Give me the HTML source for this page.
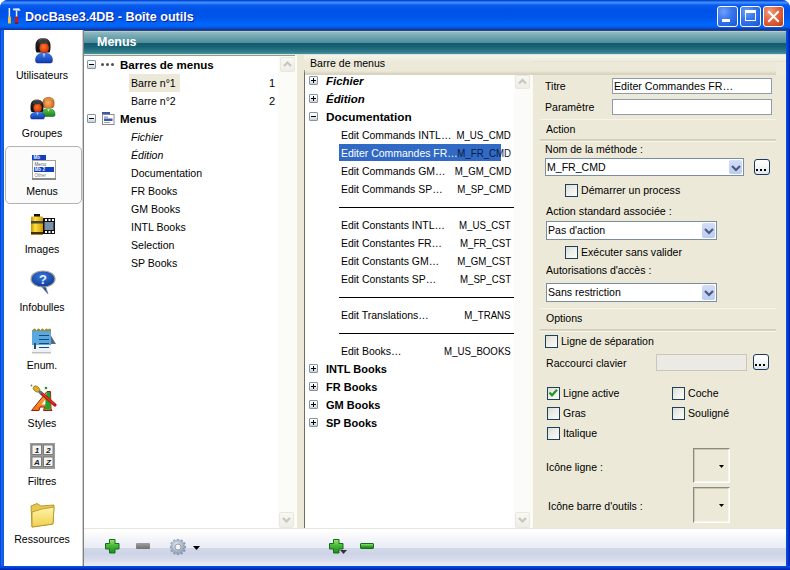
<!DOCTYPE html><html><head><meta charset="utf-8"><style>
html,body{margin:0;padding:0;width:790px;height:570px;overflow:hidden;background:#fff;}
body{position:relative;font-family:"Liberation Sans",sans-serif;color:#000;}
.t{position:absolute;white-space:pre;}
.pm{position:absolute;width:7px;height:7px;border:1px solid #8494a2;border-radius:1px;background:linear-gradient(180deg,#fff 0%,#f4f5f6 45%,#c8d0d6 100%);}
.pm:before{content:"";position:absolute;left:1px;top:3px;width:5px;height:1px;background:#000;}
.pm.plus:after{content:"";position:absolute;left:3px;top:1px;width:1px;height:5px;background:#000;}
.cb{position:absolute;width:11px;height:11px;border:1px solid #1c5180;background:linear-gradient(135deg,#dcdcd7 0%,#f0f0ea 60%,#fff 100%);}
.combo{position:absolute;border:1px solid #7f9db9;background:#fff;box-sizing:border-box;}
.dd{position:absolute;right:1px;top:1px;bottom:1px;width:15px;border-radius:2px;background:linear-gradient(180deg,#d4e0fc,#b6c9f7);}
.dots{position:absolute;box-sizing:border-box;border:1px solid #003c74;border-radius:3px;background:linear-gradient(180deg,#fff 0%,#ecf4fc 60%,#d6e4f4 100%);}
.sep{position:absolute;height:1px;}
</style></head><body>

<div style="position:absolute;left:0px;top:0px;width:790px;height:570px;background:#0054e3;border-radius:8px 8px 0 0;"></div>
<div style="position:absolute;left:0px;top:0px;width:790px;height:30px;border-radius:8px 8px 0 0;background:linear-gradient(180deg,#0646d4 0px,#0a4ad8 1px,#3d95ff 2px,#3a8cfc 3px,#0a5cf0 5px,#0052e6 10px,#0054ea 17px,#0064f8 23px,#0066fa 26px,#0a50d8 28px,#0838b0 29px,#1a3a90 30px);"></div>
<div style="position:absolute;left:0px;top:30px;width:4px;height:540px;background:linear-gradient(90deg,#0831d9,#166aee 40%,#0855dd);"></div>
<div style="position:absolute;left:786px;top:30px;width:4px;height:540px;background:linear-gradient(90deg,#0855dd,#003bda 50%,#001ea0);"></div>
<div style="position:absolute;left:0px;top:566px;width:790px;height:4px;background:linear-gradient(180deg,#0855dd,#003bda 50%,#001ea0);"></div>
<svg style="position:absolute;left:6px;top:7px" width="16" height="18" viewBox="0 0 16 18">
<rect x="2.6" y="1" width="1.5" height="9" fill="#e8f0fa"/>
<path d="M2.4 9.6 L4.4 9.6 L4.9 11 L4.9 16 Q4.9 16.6 4.3 16.6 L2.6 16.6 Q2 16.6 2 16 L2 11 Z" fill="#f0c838"/>
<path d="M7 1.6 L13 1.2 L14.8 3.4 L13 3.7 L7 3.2 Z" fill="#e0e8f4"/>
<rect x="9.8" y="3.5" width="1.5" height="6.5" fill="#e8f0fa"/>
<path d="M9.4 9.6 L11.7 9.6 L12.1 11 L12.1 16.6 L9 16.6 L9 11 Z" fill="#c81820"/>
<rect x="9" y="15.6" width="3.1" height="1" fill="#501010"/>
</svg>
<div class="t" style="left:25px;top:9.99px;font-size:13px;line-height:13px;font-weight:bold;color:#fff;transform:scaleX(0.965);transform-origin:left;text-shadow:1px 1px 0 #0a1e9a;">DocBase3.4DB - Boîte outils</div>
<div style="position:absolute;left:717px;top:6px;width:21px;height:21px;box-sizing:border-box;border:1px solid #fff;border-radius:3px;background:radial-gradient(circle at 30% 25%,#6f9ff8 0%,#3a78f0 40%,#2461e0 80%,#1d50c8 100%);"></div>
<div style="position:absolute;left:722px;top:19px;width:8px;height:3px;background:#fff;"></div>
<div style="position:absolute;left:740px;top:6px;width:21px;height:21px;box-sizing:border-box;border:1px solid #fff;border-radius:3px;background:radial-gradient(circle at 30% 25%,#6f9ff8 0%,#3a78f0 40%,#2461e0 80%,#1d50c8 100%);"></div>
<div style="position:absolute;left:745px;top:10px;width:11px;height:11px;box-sizing:border-box;border:1px solid #fff;border-top-width:3px;"></div>
<div style="position:absolute;left:763px;top:6px;width:21px;height:21px;box-sizing:border-box;border:1px solid #fff;border-radius:3px;background:radial-gradient(circle at 30% 25%,#f0a080 0%,#e26a44 40%,#cf4a24 80%,#b63a18 100%);"></div>
<svg style="position:absolute;left:763px;top:6px" width="21" height="21"><path d="M6 6 L15 15 M15 6 L6 15" stroke="#fff" stroke-width="2" stroke-linecap="square"/></svg>
<div style="position:absolute;left:4px;top:30px;width:782px;height:536px;background:#ece9d8;"></div>
<div style="position:absolute;left:4px;top:30px;width:78px;height:536px;background:#fff;"></div>
<div style="position:absolute;left:82px;top:30px;width:1px;height:536px;background:#d0d0d0;"></div>
<div style="position:absolute;left:83px;top:30px;width:1px;height:536px;background:#808080;"></div>
<div style="position:absolute;left:84px;top:30px;width:702px;height:25px;background:linear-gradient(180deg,#28487a 0px,#28487a 1px,#b4cacc 1px,#b4cacc 2px,#92bac2 2px,#74a8b2 6px,#4e8e9c 13px,#145a6e 13px,#1a6276 17px,#307e8c 22px,#4c96a0 24px,#e4ece6 24px);"></div>
<div class="t" style="left:97px;top:34.99px;font-size:13px;line-height:13px;font-weight:bold;color:#fff;transform:scaleX(0.96);transform-origin:left;">Menus</div>
<div style="position:absolute;left:84px;top:54px;width:702px;height:1px;background:#dae4de;"></div>

<div style="position:absolute;left:5px;top:146px;width:77px;height:58px;box-sizing:border-box;border:1px solid #b2b2ae;border-radius:5px;background:#fbfbfb;"></div>
<div class="t" style="left:42px;width:0;top:69.69px;font-size:11px;line-height:11px;transform:scaleX(0.96);transform-origin:0 0;display:flex;justify-content:center;">Utilisateurs</div>
<div class="t" style="left:42px;width:0;top:127.69px;font-size:11px;line-height:11px;transform:scaleX(0.96);transform-origin:0 0;display:flex;justify-content:center;">Groupes</div>
<div class="t" style="left:42px;width:0;top:185.69px;font-size:11px;line-height:11px;transform:scaleX(0.96);transform-origin:0 0;display:flex;justify-content:center;">Menus</div>
<div class="t" style="left:42px;width:0;top:243.69px;font-size:11px;line-height:11px;transform:scaleX(0.96);transform-origin:0 0;display:flex;justify-content:center;">Images</div>
<div class="t" style="left:42px;width:0;top:301.69px;font-size:11px;line-height:11px;transform:scaleX(0.96);transform-origin:0 0;display:flex;justify-content:center;">Infobulles</div>
<div class="t" style="left:42px;width:0;top:359.69px;font-size:11px;line-height:11px;transform:scaleX(0.96);transform-origin:0 0;display:flex;justify-content:center;">Enum.</div>
<div class="t" style="left:42px;width:0;top:417.69px;font-size:11px;line-height:11px;transform:scaleX(0.96);transform-origin:0 0;display:flex;justify-content:center;">Styles</div>
<div class="t" style="left:42px;width:0;top:475.69px;font-size:11px;line-height:11px;transform:scaleX(0.96);transform-origin:0 0;display:flex;justify-content:center;">Filtres</div>
<div class="t" style="left:42px;width:0;top:533.69px;font-size:11px;line-height:11px;transform:scaleX(0.96);transform-origin:0 0;display:flex;justify-content:center;">Ressources</div>
<svg style="position:absolute;left:22px;top:32px" width="40" height="40" viewBox="0 0 40 40">
<defs><radialGradient id="face" cx="45%" cy="40%" r="65%"><stop offset="0" stop-color="#ff7a28"/><stop offset="1" stop-color="#c82408"/></radialGradient>
<radialGradient id="hair" cx="50%" cy="15%" r="70%"><stop offset="0" stop-color="#9a9a9a"/><stop offset="0.45" stop-color="#2a2a2a"/><stop offset="1" stop-color="#111"/></radialGradient>
<linearGradient id="blu" x1="0" y1="0" x2="0" y2="1"><stop offset="0" stop-color="#3a7af0"/><stop offset="1" stop-color="#1038b0"/></linearGradient></defs>
<path d="M13.5 13.5 C13.5 8.5 16.5 6 21 6 C25.5 6 28.5 8.5 28.5 13.5 C28.5 16.5 28.5 18.5 27.5 20.5 L14.5 20.5 C13.5 18.5 13.5 16.5 13.5 13.5 Z" fill="url(#hair)"/>
<ellipse cx="22.2" cy="16" rx="4.8" ry="5.3" fill="url(#face)"/>
<path d="M17 10.5 C19 12 23 12 27 10.5 C26 8 24 7 21 7 C18.5 7 17.5 8.5 17 10.5 Z" fill="#3a3a3a"/>
<path d="M13.5 28.5 C13.5 23.5 16.5 21 22 21 C27.5 21 30.5 23.5 30.5 28.5 C30.5 30.5 29.5 31 28 31 L16 31 C14.5 31 13.5 30.5 13.5 28.5 Z" fill="url(#blu)" stroke="#0c2a80" stroke-width="0.5"/>
<path d="M20.5 21.2 L23.5 21.2 L22 26 Z" fill="#90c8f8"/>
</svg>
<svg style="position:absolute;left:22px;top:90px" width="40" height="40" viewBox="0 0 40 40">
<defs><radialGradient id="face2" cx="45%" cy="40%" r="65%"><stop offset="0" stop-color="#ffb068"/><stop offset="1" stop-color="#e07020"/></radialGradient>
<linearGradient id="grn" x1="0" y1="0" x2="0" y2="1"><stop offset="0" stop-color="#60c850"/><stop offset="1" stop-color="#188020"/></linearGradient></defs>
<path d="M20.5 13 C20.5 9 23 7 26.5 7 C30 7 32.5 9 32.5 13 C32.5 15.5 32 17 31 18 L22 18 C21 17 20.5 15.5 20.5 13 Z" fill="#b87030"/>
<ellipse cx="26.5" cy="13.5" rx="4.3" ry="4.8" fill="url(#face2)"/>
<path d="M22 10 C24 11 28 11 31.5 10 C30.5 8 29 7.5 26.5 7.5 C24 7.5 22.5 8.5 22 10 Z" fill="#d89048"/>
<path d="M20 24.5 C20 20.5 22.5 18.5 26.5 18.5 C30.5 18.5 33 20.5 33 24.5 C33 26 32.5 26.5 31 26.5 L22 26.5 C20.5 26.5 20 26 20 24.5 Z" fill="url(#grn)" stroke="#0c5a10" stroke-width="0.5"/>
<path d="M25.2 18.7 L27.8 18.7 L26.5 22 Z" fill="#c8f0b0"/>
<path d="M8.5 16.5 C8.5 12 11 9.5 15 9.5 C19 9.5 21.5 12 21.5 16.5 C21.5 19 21.5 20.5 20.5 22 L9.5 22 C8.5 20.5 8.5 19 8.5 16.5 Z" fill="url(#hair)"/>
<ellipse cx="15.6" cy="18" rx="4.2" ry="4.6" fill="url(#face)"/>
<path d="M11 13.5 C13 14.5 17 14.5 20 13.5 C19 11 17.5 10.3 15 10.3 C13 10.3 11.5 11.5 11 13.5 Z" fill="#3a3a3a"/>
<path d="M8.5 26.5 C8.5 23.5 11 22 15.5 22 C20 22 22.5 23.5 22.5 26.5 C22.5 28.5 22 29 20.5 29 L10.5 29 C9 29 8.5 28.5 8.5 26.5 Z" fill="url(#blu)" stroke="#0c2a80" stroke-width="0.5"/>
<path d="M14.3 22.2 L16.7 22.2 L15.5 25.5 Z" fill="#90c8f8"/>
</svg>
<svg style="position:absolute;left:22px;top:148px" width="40" height="40" viewBox="0 0 40 40">
<rect x="10" y="7" width="14" height="5" fill="#1040c0"/>
<text x="11.5" y="11" font-family="Liberation Sans" font-weight="bold" font-size="4.6" fill="#e8f0ff">Mb</text>
<rect x="10.5" y="12.5" width="23" height="19" fill="#fff" stroke="#a0a0a0" stroke-width="1"/>
<rect x="10" y="30" width="24" height="2" fill="#8a8a8a"/>
<text x="12.5" y="17.5" font-family="Liberation Sans" font-size="4.6" fill="#555">Menu</text>
<rect x="12" y="19" width="20" height="5" fill="#1040c0"/>
<text x="12.5" y="23" font-family="Liberation Sans" font-weight="bold" font-size="4.6" fill="#e8f0ff">Mb 2</text>
<text x="12.5" y="28.5" font-family="Liberation Sans" font-size="4.6" fill="#777">Other</text>
</svg>
<svg style="position:absolute;left:22px;top:206px" width="40" height="40" viewBox="0 0 40 40">
<defs><linearGradient id="yel" x1="0" y1="0" x2="1" y2="0"><stop offset="0" stop-color="#c89000"/><stop offset="0.35" stop-color="#ffe040"/><stop offset="1" stop-color="#d09800"/></linearGradient></defs>
<rect x="9" y="17" width="13" height="1" fill="#000"/>
<rect x="21" y="12" width="12" height="16" fill="#111"/>
<rect x="22.5" y="16" width="9" height="8" fill="#7890a8"/>
<rect x="23" y="13" width="2" height="2" fill="#fff"/><rect x="26.5" y="13" width="2" height="2" fill="#fff"/><rect x="30" y="13" width="2" height="2" fill="#fff"/>
<rect x="23" y="25" width="2" height="2" fill="#fff"/><rect x="26.5" y="25" width="2" height="2" fill="#fff"/><rect x="30" y="25" width="2" height="2" fill="#fff"/>
<rect x="12" y="8" width="6" height="3" fill="#111"/>
<rect x="9" y="10.5" width="12" height="18" rx="1" fill="url(#yel)"/>
<rect x="9" y="15" width="12" height="2.5" fill="#444"/>
<rect x="9" y="26" width="12" height="2.5" fill="#443300"/>
</svg>
<svg style="position:absolute;left:22px;top:264px" width="40" height="40" viewBox="0 0 40 40">
<defs><radialGradient id="bub" cx="45%" cy="35%" r="65%"><stop offset="0" stop-color="#3a78d8"/><stop offset="1" stop-color="#0c3a98"/></radialGradient></defs>
<path d="M19 22 L26 30 L23 21 Z" fill="#1848a8" stroke="#888" stroke-width="0.8"/>
<ellipse cx="21" cy="15" rx="12" ry="8" fill="url(#bub)" stroke="#a0a0a0" stroke-width="1.2"/>
<text x="21" y="20" font-family="Liberation Sans" font-weight="bold" font-size="13" fill="#e8f0ff" text-anchor="middle">?</text>
</svg>
<svg style="position:absolute;left:22px;top:322px" width="40" height="40" viewBox="0 0 40 40">
<path d="M28 12 L34 22 L28 22 Z" fill="#5a6878"/>
<rect x="10" y="7" width="19" height="24" fill="#eef2f6"/>
<rect x="10" y="30" width="19" height="1.5" fill="#c0c0c0"/>
<rect x="10" y="8" width="19" height="15" fill="#5aa8e0"/>
<g fill="#a08830"><circle cx="12.5" cy="8" r="1.5"/><circle cx="16.5" cy="8" r="1.5"/><circle cx="20.5" cy="8" r="1.5"/><circle cx="24.5" cy="8" r="1.5"/><circle cx="27.5" cy="8" r="1.5"/></g>
<rect x="17" y="13" width="10" height="1" fill="#1a4a78"/><rect x="17" y="17" width="10" height="1" fill="#1a4a78"/><rect x="17" y="21" width="10" height="1" fill="#1a4a78"/><rect x="17" y="25" width="10" height="1" fill="#1a4a78"/>
<rect x="12" y="21" width="2" height="6" fill="#2a4a68"/>
</svg>
<svg style="position:absolute;left:22px;top:380px" width="40" height="40" viewBox="0 0 40 40">
<defs><linearGradient id="org" x1="0" y1="0" x2="0" y2="1"><stop offset="0" stop-color="#ffb040"/><stop offset="1" stop-color="#f07018"/></linearGradient></defs>
<path d="M9.5 30.5 L25 11.5 L28.5 11.5 L29 29 L30 30.5 L21.5 30.5 L22.5 27 L18 27 L17 30.5 Z" fill="url(#org)" stroke="#982010" stroke-width="1" stroke-linejoin="round"/>
<path d="M25 12 L28 12 L28.5 29.5 L23 29.5 L23.5 19 Z" fill="#22a030"/>
<path d="M19.5 24.5 L23.3 24.5 L23.3 19.5 Z" fill="#fff"/>
<path d="M19 13 L33 25" stroke="#b81810" stroke-width="3.2" stroke-linecap="round"/>
<path d="M20 13.5 L32 24" stroke="#e85040" stroke-width="1" stroke-linecap="round"/>
<path d="M17 11 L19.5 13.3" stroke="#4a7a98" stroke-width="3" />
<ellipse cx="14.5" cy="9" rx="3.6" ry="2.6" transform="rotate(40 14.5 9)" fill="#d8b020" stroke="#806010" stroke-width="0.6"/>
<circle cx="24" cy="8" r="1.3" fill="#2a8a40"/><circle cx="9.5" cy="5.5" r="0.9" fill="#777"/>
</svg>
<svg style="position:absolute;left:22px;top:438px" width="40" height="40" viewBox="0 0 40 40">
<rect x="8" y="5" width="25" height="26" fill="#9a9a98"/>
<rect x="10" y="7" width="9.5" height="9.5" fill="#f4f4f2" stroke="#6a6a68" stroke-width="0.8"/>
<rect x="21.5" y="7" width="9.5" height="9.5" fill="#f4f4f2" stroke="#6a6a68" stroke-width="0.8"/>
<rect x="10" y="19" width="9.5" height="9.5" fill="#f4f4f2" stroke="#6a6a68" stroke-width="0.8"/>
<rect x="21.5" y="19" width="9.5" height="9.5" fill="#f4f4f2" stroke="#6a6a68" stroke-width="0.8"/>
<g font-family="Liberation Sans" font-weight="bold" font-style="italic" font-size="8" fill="#222" text-anchor="middle">
<text x="15" y="15">1</text><text x="26.5" y="15">2</text><text x="15" y="27">A</text><text x="26.5" y="27">Z</text></g>
</svg>
<svg style="position:absolute;left:22px;top:496px" width="40" height="40" viewBox="0 0 40 40">
<defs><linearGradient id="fold" x1="0" y1="0" x2="0" y2="1"><stop offset="0" stop-color="#fff4a8"/><stop offset="1" stop-color="#f0d050"/></linearGradient></defs>
<path d="M9 10 L15 7.5 L19 10 L32 9 L31 28 L10 31 Z" fill="#e8c850" stroke="#a88818" stroke-width="0.8"/>
<path d="M10 16 L20 13 L32 11 L31 28 L10 31 Z" fill="url(#fold)" stroke="#b09020" stroke-width="0.8"/>
</svg>
<div style="position:absolute;left:84px;top:55px;width:213px;height:473px;background:#fff;"></div>
<div style="position:absolute;left:84px;top:55px;width:213px;height:1px;background:#9c9a8e;"></div>
<div style="position:absolute;left:278px;top:56px;width:17px;height:472px;background:#fbfbf8;"></div>
<div style="position:absolute;left:295px;top:55px;width:2px;height:473px;background:#fdfdf6;"></div>
<div style="position:absolute;left:297px;top:55px;width:7px;height:473px;background:#ece9d8;"></div>
<div style="position:absolute;left:304px;top:72px;width:1px;height:456px;background:#6e6e62;"></div>
<div style="position:absolute;left:280px;top:57px;width:15px;height:15px;box-sizing:border-box;border:1px solid #e8e8e0;border-radius:2px;background:linear-gradient(180deg,#f8f8f4,#eeede6);"></div>
<svg style="position:absolute;left:280px;top:57px" width="15" height="15"><path d="M4 9 L7.5 5.5 L11 9" fill="none" stroke="#c6c6be" stroke-width="2.2"/></svg>
<div style="position:absolute;left:279px;top:512px;width:15px;height:16px;box-sizing:border-box;border:1px solid #e8e8e0;border-radius:2px;background:linear-gradient(180deg,#f8f8f4,#eeede6);"></div>
<svg style="position:absolute;left:279px;top:512px" width="15" height="16"><path d="M4 6 L7.5 9.5 L11 6" fill="none" stroke="#c6c6be" stroke-width="2.2"/></svg>
<div class="pm" style="left:87px;top:60px"></div>
<svg style="position:absolute;left:100px;top:62px" width="16" height="5"><circle cx="2.5" cy="2.5" r="1.5" fill="#505050"/><circle cx="7.5" cy="2.5" r="1.5" fill="#505050"/><circle cx="12.5" cy="2.5" r="1.5" fill="#505050"/></svg>
<div class="t" style="left:120px;top:59.69px;font-size:11px;line-height:11px;font-weight:bold;transform:scaleX(1.05);transform-origin:left;">Barres de menus</div>
<div style="position:absolute;left:129px;top:74px;width:51px;height:18px;background:#ece9d8;"></div>
<div class="t" style="left:131px;top:77.69px;font-size:11px;line-height:11px;transform:scaleX(0.96);transform-origin:left;">Barre n°1</div>
<div class="t" style="left:131px;top:95.69px;font-size:11px;line-height:11px;transform:scaleX(0.96);transform-origin:left;">Barre n°2</div>
<div class="t" style="right:515px;top:77.69px;font-size:11px;line-height:11px;transform:scaleX(1);transform-origin:right;">1</div>
<div class="t" style="right:515px;top:95.69px;font-size:11px;line-height:11px;transform:scaleX(1);transform-origin:right;">2</div>
<div class="pm" style="left:87px;top:114px"></div>
<svg style="position:absolute;left:101px;top:111px" width="15" height="16" viewBox="0 0 15 16">
<rect x="1" y="1" width="8" height="2.5" fill="#3a58b0"/>
<rect x="1.5" y="3.5" width="11.5" height="10" fill="#fff" stroke="#8a8a88" stroke-width="1"/>
<rect x="3" y="5.5" width="4" height="1.5" fill="#a0a8c0"/>
<rect x="3" y="7.5" width="8.5" height="2.5" fill="#3a5ab0"/>
<rect x="3" y="11" width="6" height="1" fill="#a0a0b0"/>
</svg>
<div class="t" style="left:120px;top:113.69px;font-size:11px;line-height:11px;font-weight:bold;transform:scaleX(1.05);transform-origin:left;">Menus</div>
<div class="t" style="left:131px;top:131.69px;font-size:11px;line-height:11px;font-style:italic;transform:scaleX(0.96);transform-origin:left;">Fichier</div>
<div class="t" style="left:131px;top:149.69px;font-size:11px;line-height:11px;font-style:italic;transform:scaleX(0.96);transform-origin:left;">Édition</div>
<div class="t" style="left:131px;top:167.69px;font-size:11px;line-height:11px;transform:scaleX(0.96);transform-origin:left;">Documentation</div>
<div class="t" style="left:131px;top:185.69px;font-size:11px;line-height:11px;transform:scaleX(0.96);transform-origin:left;">FR Books</div>
<div class="t" style="left:131px;top:203.69px;font-size:11px;line-height:11px;transform:scaleX(0.96);transform-origin:left;">GM Books</div>
<div class="t" style="left:131px;top:221.69px;font-size:11px;line-height:11px;transform:scaleX(0.96);transform-origin:left;">INTL Books</div>
<div class="t" style="left:131px;top:239.69px;font-size:11px;line-height:11px;transform:scaleX(0.96);transform-origin:left;">Selection</div>
<div class="t" style="left:131px;top:257.69px;font-size:11px;line-height:11px;transform:scaleX(0.96);transform-origin:left;">SP Books</div>
<div style="position:absolute;left:304px;top:55px;width:482px;height:20px;background:linear-gradient(180deg,#f6f5ee 0px,#f2f0e5 3px,#ece9d9 7px,#ece9d8 16px,#e4e0cf 17px,#d8d3bf 19px,#d8d3bf 20px);"></div>
<div style="position:absolute;left:533px;top:61px;width:253px;height:1px;background:#e6e2d2;"></div>
<div class="t" style="left:310px;top:57.69px;font-size:11px;line-height:11px;transform:scaleX(0.96);transform-origin:left;">Barre de menus</div>
<div style="position:absolute;left:305px;top:75px;width:209px;height:453px;background:#fff;"></div>
<div style="position:absolute;left:304px;top:70px;width:1px;height:458px;background:linear-gradient(180deg,#a8a598,#6e6e62 4px);"></div>
<div style="position:absolute;left:514px;top:75px;width:17px;height:453px;background:#fbfbf8;"></div>
<div style="position:absolute;left:531px;top:75px;width:2px;height:453px;background:#fdfdf6;"></div>
<div style="position:absolute;left:515px;top:75px;width:15px;height:14px;box-sizing:border-box;border:1px solid #e8e8e0;border-radius:2px;background:linear-gradient(180deg,#f8f8f4,#eeede6);"></div>
<svg style="position:absolute;left:515px;top:75px" width="15" height="14"><path d="M4 8.5 L7.5 5 L11 8.5" fill="none" stroke="#c6c6be" stroke-width="2.2"/></svg>
<div style="position:absolute;left:515px;top:512px;width:15px;height:16px;box-sizing:border-box;border:1px solid #e8e8e0;border-radius:2px;background:linear-gradient(180deg,#f8f8f4,#eeede6);"></div>
<svg style="position:absolute;left:515px;top:512px" width="15" height="16"><path d="M4 6 L7.5 9.5 L11 6" fill="none" stroke="#c6c6be" stroke-width="2.2"/></svg>
<div class="pm plus" style="left:309px;top:76px"></div>
<div class="t" style="left:326px;top:75.69px;font-size:11px;line-height:11px;font-weight:bold;font-style:italic;transform:scaleX(1.04);transform-origin:left;">Fichier</div>
<div class="pm plus" style="left:309px;top:94px"></div>
<div class="t" style="left:326px;top:93.69px;font-size:11px;line-height:11px;font-weight:bold;font-style:italic;transform:scaleX(1.04);transform-origin:left;">Édition</div>
<div class="pm" style="left:309px;top:112px"></div>
<div class="t" style="left:326px;top:111.69px;font-size:11px;line-height:11px;font-weight:bold;transform:scaleX(1.07);transform-origin:left;">Documentation</div>
<div style="position:absolute;left:339px;top:144px;width:162px;height:17px;background:#316ac5;"></div>
<div class="t" style="left:341px;top:129.69px;font-size:11px;line-height:11px;transform:scaleX(0.95);transform-origin:left;">Edit Commands INTL…</div>
<div class="t" style="right:279px;top:129.69px;font-size:11px;line-height:11px;transform:scaleX(0.88);transform-origin:right;">M_US_CMD</div>
<div class="t" style="left:341px;top:147.69px;font-size:11px;line-height:11px;color:#fff;transform:scaleX(0.95);transform-origin:left;">Editer Commandes FR…</div>
<div class="t" style="right:279px;top:147.69px;font-size:11px;line-height:11px;color:#0a1a40;transform:scaleX(0.88);transform-origin:right;">M_FR_CMD</div>
<div class="t" style="left:341px;top:165.69px;font-size:11px;line-height:11px;transform:scaleX(0.95);transform-origin:left;">Edit Commands GM…</div>
<div class="t" style="right:279px;top:165.69px;font-size:11px;line-height:11px;transform:scaleX(0.88);transform-origin:right;">M_GM_CMD</div>
<div class="t" style="left:341px;top:183.69px;font-size:11px;line-height:11px;transform:scaleX(0.95);transform-origin:left;">Edit Commands SP…</div>
<div class="t" style="right:279px;top:183.69px;font-size:11px;line-height:11px;transform:scaleX(0.88);transform-origin:right;">M_SP_CMD</div>
<div class="t" style="left:341px;top:219.69px;font-size:11px;line-height:11px;transform:scaleX(0.95);transform-origin:left;">Edit Constants INTL…</div>
<div class="t" style="right:279px;top:219.69px;font-size:11px;line-height:11px;transform:scaleX(0.88);transform-origin:right;">M_US_CST</div>
<div class="t" style="left:341px;top:237.69px;font-size:11px;line-height:11px;transform:scaleX(0.95);transform-origin:left;">Edit Constantes FR…</div>
<div class="t" style="right:279px;top:237.69px;font-size:11px;line-height:11px;transform:scaleX(0.88);transform-origin:right;">M_FR_CST</div>
<div class="t" style="left:341px;top:255.69px;font-size:11px;line-height:11px;transform:scaleX(0.95);transform-origin:left;">Edit Constants GM…</div>
<div class="t" style="right:279px;top:255.69px;font-size:11px;line-height:11px;transform:scaleX(0.88);transform-origin:right;">M_GM_CST</div>
<div class="t" style="left:341px;top:273.69px;font-size:11px;line-height:11px;transform:scaleX(0.95);transform-origin:left;">Edit Constants SP…</div>
<div class="t" style="right:279px;top:273.69px;font-size:11px;line-height:11px;transform:scaleX(0.88);transform-origin:right;">M_SP_CST</div>
<div class="t" style="left:341px;top:309.69px;font-size:11px;line-height:11px;transform:scaleX(0.95);transform-origin:left;">Edit Translations…</div>
<div class="t" style="right:279px;top:309.69px;font-size:11px;line-height:11px;transform:scaleX(0.88);transform-origin:right;">M_TRANS</div>
<div class="t" style="left:341px;top:345.69px;font-size:11px;line-height:11px;transform:scaleX(0.95);transform-origin:left;">Edit Books…</div>
<div class="t" style="right:279px;top:345.69px;font-size:11px;line-height:11px;transform:scaleX(0.88);transform-origin:right;">M_US_BOOKS</div>
<div style="position:absolute;left:339px;top:207px;width:175px;height:1px;background:#000;"></div>
<div style="position:absolute;left:339px;top:297px;width:175px;height:1px;background:#000;"></div>
<div style="position:absolute;left:339px;top:333px;width:175px;height:1px;background:#000;"></div>
<div class="pm plus" style="left:309px;top:364px"></div>
<div class="t" style="left:326px;top:363.69px;font-size:11px;line-height:11px;font-weight:bold;transform:scaleX(1.0);transform-origin:left;">INTL Books</div>
<div class="pm plus" style="left:309px;top:382px"></div>
<div class="t" style="left:326px;top:381.69px;font-size:11px;line-height:11px;font-weight:bold;transform:scaleX(1.0);transform-origin:left;">FR Books</div>
<div class="pm plus" style="left:309px;top:400px"></div>
<div class="t" style="left:326px;top:399.69px;font-size:11px;line-height:11px;font-weight:bold;transform:scaleX(1.0);transform-origin:left;">GM Books</div>
<div class="pm plus" style="left:309px;top:418px"></div>
<div class="t" style="left:326px;top:417.69px;font-size:11px;line-height:11px;font-weight:bold;transform:scaleX(1.0);transform-origin:left;">SP Books</div>
<div style="position:absolute;left:533px;top:75px;width:253px;height:453px;background:#ece9d8;"></div>
<div style="position:absolute;left:776px;top:62px;width:10px;height:13px;background:#eeebdd;"></div>
<div style="position:absolute;left:532px;top:75px;width:1px;height:453px;background:#fbfaf2;"></div>
<div class="t" style="left:545px;top:80.69px;font-size:11px;line-height:11px;transform:scaleX(0.96);transform-origin:left;">Titre</div>
<div style="position:absolute;left:612px;top:78px;width:160px;height:16px;box-sizing:border-box;border:1px solid #8e9cab;background:#fff;"></div>
<div class="t" style="left:614px;top:80.69px;font-size:11px;line-height:11px;transform:scaleX(0.97);transform-origin:left;">Editer Commandes FR…</div>
<div class="t" style="left:545px;top:101.69px;font-size:11px;line-height:11px;transform:scaleX(0.96);transform-origin:left;">Paramètre</div>
<div style="position:absolute;left:612px;top:99px;width:160px;height:16px;box-sizing:border-box;border:1px solid #8e9cab;background:#fff;"></div>
<div style="position:absolute;left:540px;top:119px;width:236px;height:1px;background:#f6f4ec;"></div>
<div class="t" style="left:546px;top:123.69px;font-size:11px;line-height:11px;transform:scaleX(0.96);transform-origin:left;">Action</div>
<div style="position:absolute;left:540px;top:139px;width:236px;height:2px;background:linear-gradient(180deg,#cfcab4,#dcd8c6);"></div>
<div style="position:absolute;left:540px;top:141px;width:236px;height:1px;background:#f6f5ee;"></div>
<div class="t" style="left:545px;top:143.69px;font-size:11px;line-height:11px;transform:scaleX(0.96);transform-origin:left;">Nom de la méthode :</div>
<div style="position:absolute;left:545px;top:158px;width:199px;height:18px;box-sizing:border-box;border:1px solid #7a8ea2;background:#fff;"></div>
<div style="position:absolute;left:729px;top:160px;width:13px;height:14px;border-radius:2px;background:linear-gradient(180deg,#d2ddf8,#bccbf2);"></div>
<svg style="position:absolute;left:730.5px;top:163.5px" width="10" height="8"><path d="M1 2 L5 6 L9 2" fill="none" stroke="#4a5a7a" stroke-width="2.2"/></svg>
<div class="t" style="left:547px;top:161.69px;font-size:11px;line-height:11px;transform:scaleX(0.96);transform-origin:left;">M_FR_CMD</div>
<div style="position:absolute;left:754px;top:159px;width:16px;height:16px;box-sizing:border-box;border:1px solid #1c3a58;border-radius:3px;background:linear-gradient(180deg,#fff 0%,#f4f6f8 50%,#dfe6ee 100%);"></div>
<svg style="position:absolute;left:754px;top:159px" width="16" height="16"><rect x="2" y="10" width="2" height="2" fill="#000"/><rect x="6" y="10" width="2" height="2" fill="#000"/><rect x="10" y="10" width="2" height="2" fill="#000"/></svg>
<div style="position:absolute;left:565px;top:184px;width:13px;height:13px;box-sizing:border-box;border:1px solid #1f3f5e;background:linear-gradient(135deg,#dcdcd7 0%,#eeeee8 45%,#fbfbf8 100%);"></div>
<div class="t" style="left:581px;top:184.69px;font-size:11px;line-height:11px;transform:scaleX(0.96);transform-origin:left;">Démarrer un process</div>
<div class="t" style="left:546px;top:205.69px;font-size:11px;line-height:11px;transform:scaleX(0.975);transform-origin:left;">Action standard associée :</div>
<div style="position:absolute;left:546px;top:221px;width:171px;height:19px;box-sizing:border-box;border:1px solid #7a8ea2;background:#fff;"></div>
<div style="position:absolute;left:702px;top:223px;width:13px;height:15px;border-radius:2px;background:linear-gradient(180deg,#d2ddf8,#bccbf2);"></div>
<svg style="position:absolute;left:703.5px;top:226.5px" width="10" height="8"><path d="M1 2 L5 6 L9 2" fill="none" stroke="#4a5a7a" stroke-width="2.2"/></svg>
<div class="t" style="left:548px;top:224.69px;font-size:11px;line-height:11px;transform:scaleX(0.96);transform-origin:left;">Pas d'action</div>
<div style="position:absolute;left:565px;top:246px;width:13px;height:13px;box-sizing:border-box;border:1px solid #1f3f5e;background:linear-gradient(135deg,#dcdcd7 0%,#eeeee8 45%,#fbfbf8 100%);"></div>
<div class="t" style="left:581px;top:246.69px;font-size:11px;line-height:11px;transform:scaleX(0.96);transform-origin:left;">Exécuter sans valider</div>
<div class="t" style="left:546px;top:264.69px;font-size:11px;line-height:11px;transform:scaleX(0.96);transform-origin:left;">Autorisations d'accès :</div>
<div style="position:absolute;left:546px;top:283px;width:171px;height:19px;box-sizing:border-box;border:1px solid #7a8ea2;background:#fff;"></div>
<div style="position:absolute;left:702px;top:285px;width:13px;height:15px;border-radius:2px;background:linear-gradient(180deg,#d2ddf8,#bccbf2);"></div>
<svg style="position:absolute;left:703.5px;top:288.5px" width="10" height="8"><path d="M1 2 L5 6 L9 2" fill="none" stroke="#4a5a7a" stroke-width="2.2"/></svg>
<div class="t" style="left:548px;top:286.69px;font-size:11px;line-height:11px;transform:scaleX(0.96);transform-origin:left;">Sans restriction</div>
<div style="position:absolute;left:540px;top:308px;width:236px;height:1px;background:#f6f4ec;"></div>
<div class="t" style="left:546px;top:312.69px;font-size:11px;line-height:11px;transform:scaleX(0.96);transform-origin:left;">Options</div>
<div style="position:absolute;left:540px;top:329px;width:236px;height:2px;background:linear-gradient(180deg,#cfcab4,#dcd8c6);"></div>
<div style="position:absolute;left:540px;top:331px;width:236px;height:1px;background:#f6f5ee;"></div>
<div style="position:absolute;left:545px;top:335px;width:13px;height:13px;box-sizing:border-box;border:1px solid #1f3f5e;background:linear-gradient(135deg,#dcdcd7 0%,#eeeee8 45%,#fbfbf8 100%);"></div>
<div class="t" style="left:561px;top:335.69px;font-size:11px;line-height:11px;transform:scaleX(0.96);transform-origin:left;">Ligne de séparation</div>
<div class="t" style="left:546px;top:357.69px;font-size:11px;line-height:11px;transform:scaleX(0.96);transform-origin:left;">Raccourci clavier</div>
<div style="position:absolute;left:656px;top:354px;width:91px;height:17px;box-sizing:border-box;border:1px solid #c9c7ba;background:#ebeae4;"></div>
<div style="position:absolute;left:753px;top:354px;width:16px;height:16px;box-sizing:border-box;border:1px solid #1c3a58;border-radius:3px;background:linear-gradient(180deg,#fff 0%,#f4f6f8 50%,#dfe6ee 100%);"></div>
<svg style="position:absolute;left:753px;top:354px" width="16" height="16"><rect x="2" y="10" width="2" height="2" fill="#000"/><rect x="6" y="10" width="2" height="2" fill="#000"/><rect x="10" y="10" width="2" height="2" fill="#000"/></svg>
<div style="position:absolute;left:547px;top:387px;width:13px;height:13px;box-sizing:border-box;border:1px solid #1f3f5e;background:linear-gradient(135deg,#dcdcd7 0%,#eeeee8 45%,#fbfbf8 100%);"></div>
<svg style="position:absolute;left:547px;top:387px" width="13" height="13"><path d="M2.5 5.5 L5 8.3 L10 2.8" fill="none" stroke="#24962c" stroke-width="2.3"/></svg>
<div class="t" style="left:563px;top:387.69px;font-size:11px;line-height:11px;transform:scaleX(0.96);transform-origin:left;">Ligne active</div>
<div style="position:absolute;left:672px;top:387px;width:13px;height:13px;box-sizing:border-box;border:1px solid #1f3f5e;background:linear-gradient(135deg,#dcdcd7 0%,#eeeee8 45%,#fbfbf8 100%);"></div>
<div class="t" style="left:688px;top:387.69px;font-size:11px;line-height:11px;transform:scaleX(0.96);transform-origin:left;">Coche</div>
<div style="position:absolute;left:547px;top:407px;width:13px;height:13px;box-sizing:border-box;border:1px solid #1f3f5e;background:linear-gradient(135deg,#dcdcd7 0%,#eeeee8 45%,#fbfbf8 100%);"></div>
<div class="t" style="left:563px;top:407.69px;font-size:11px;line-height:11px;transform:scaleX(0.96);transform-origin:left;">Gras</div>
<div style="position:absolute;left:672px;top:407px;width:13px;height:13px;box-sizing:border-box;border:1px solid #1f3f5e;background:linear-gradient(135deg,#dcdcd7 0%,#eeeee8 45%,#fbfbf8 100%);"></div>
<div class="t" style="left:688px;top:407.69px;font-size:11px;line-height:11px;transform:scaleX(0.96);transform-origin:left;">Souligné</div>
<div style="position:absolute;left:547px;top:427px;width:13px;height:13px;box-sizing:border-box;border:1px solid #1f3f5e;background:linear-gradient(135deg,#dcdcd7 0%,#eeeee8 45%,#fbfbf8 100%);"></div>
<div class="t" style="left:563px;top:427.69px;font-size:11px;line-height:11px;transform:scaleX(0.96);transform-origin:left;">Italique</div>
<div class="t" style="left:546px;top:461.69px;font-size:11px;line-height:11px;transform:scaleX(0.96);transform-origin:left;">Icône ligne :</div>
<div class="t" style="left:548px;top:500.69px;font-size:11px;line-height:11px;transform:scaleX(0.96);transform-origin:left;">Icône barre d'outils :</div>
<div style="position:absolute;left:693px;top:448px;width:37px;height:35px;box-sizing:border-box;border:1px solid;border-color:#8c8a7c #fff #fff #8c8a7c;"></div>
<div style="position:absolute;left:694px;top:449px;width:35px;height:33px;box-sizing:border-box;border:1px solid;border-color:#ccc8b4 #f6f5ee #f6f5ee #ccc8b4;"></div>
<svg style="position:absolute;left:719px;top:465px" width="6" height="4"><path d="M0 0 L5 0 L2.5 3 Z" fill="#000"/></svg>
<div style="position:absolute;left:693px;top:487px;width:37px;height:36px;box-sizing:border-box;border:1px solid;border-color:#8c8a7c #fff #fff #8c8a7c;"></div>
<div style="position:absolute;left:694px;top:488px;width:35px;height:34px;box-sizing:border-box;border:1px solid;border-color:#ccc8b4 #f6f5ee #f6f5ee #ccc8b4;"></div>
<svg style="position:absolute;left:719px;top:504px" width="6" height="4"><path d="M0 0 L5 0 L2.5 3 Z" fill="#000"/></svg>
<div style="position:absolute;left:84px;top:528px;width:702px;height:38px;background:linear-gradient(180deg,#e6e5de 0px,#e6e5de 1px,#fefefe 1px,#fcfcfd 5px,#f2f4f9 12px,#e9ecf5 19.5px,#d2d8e8 20.5px,#cdd4e7 26px,#d9ddec 32px,#e2e7f1 35px,#e8eef4 38px);"></div>
<svg style="position:absolute;left:105px;top:539px" width="15" height="15" viewBox="0 0 15 15">
<defs><linearGradient id="gp105" x1="0" y1="0" x2="0" y2="1"><stop offset="0" stop-color="#9ae878"/><stop offset="0.45" stop-color="#48b838"/><stop offset="1" stop-color="#208a20"/></linearGradient></defs>
<path d="M4.5 0.5 H10 V4.5 H14 V10 H10 V14 H4.5 V10 H0.5 V4.5 H4.5 Z" fill="url(#gp105)" stroke="#1a6a18" stroke-width="1" stroke-linejoin="round"/></svg>
<div style="position:absolute;left:136px;top:543px;width:14px;height:6px;border-radius:1px;background:linear-gradient(180deg,#a0a0a0,#707070);"></div>
<svg style="position:absolute;left:170px;top:539px" width="16" height="16" viewBox="0 0 16 16">
<defs><radialGradient id="gear" cx="40%" cy="35%" r="70%"><stop offset="0" stop-color="#dfe8f2"/><stop offset="1" stop-color="#8094ac"/></radialGradient></defs>
<path d="M14.12 7.02 L15.96 7.20 L15.96 8.80 L14.12 8.98 L13.79 10.21 L15.30 11.28 L14.49 12.68 L12.81 11.91 L11.91 12.81 L12.68 14.49 L11.28 15.30 L10.21 13.79 L8.98 14.12 L8.80 15.96 L7.20 15.96 L7.02 14.12 L5.79 13.79 L4.72 15.30 L3.32 14.49 L4.09 12.81 L3.19 11.91 L1.51 12.68 L0.70 11.28 L2.21 10.21 L1.88 8.98 L0.04 8.80 L0.04 7.20 L1.88 7.02 L2.21 5.79 L0.70 4.72 L1.51 3.32 L3.19 4.09 L4.09 3.19 L3.32 1.51 L4.72 0.70 L5.79 2.21 L7.02 1.88 L7.20 0.04 L8.80 0.04 L8.98 1.88 L10.21 2.21 L11.28 0.70 L12.68 1.51 L11.91 3.19 L12.81 4.09 L14.49 3.32 L15.30 4.72 L13.79 5.79 Z" fill="url(#gear)" stroke="#7888a0" stroke-width="0.6" stroke-linejoin="round"/>
<circle cx="8" cy="8" r="3" fill="#f6f4ea" stroke="#8090a8" stroke-width="0.8"/>
</svg>
<svg style="position:absolute;left:193px;top:546px" width="8" height="4"><path d="M0 0 H7 L3.5 4 Z" fill="#000"/></svg>
<svg style="position:absolute;left:329px;top:539px" width="15" height="15" viewBox="0 0 15 15">
<defs><linearGradient id="gp329" x1="0" y1="0" x2="0" y2="1"><stop offset="0" stop-color="#9ae878"/><stop offset="0.45" stop-color="#48b838"/><stop offset="1" stop-color="#208a20"/></linearGradient></defs>
<path d="M4.5 0.5 H10 V4.5 H14 V10 H10 V14 H4.5 V10 H0.5 V4.5 H4.5 Z" fill="url(#gp329)" stroke="#1a6a18" stroke-width="1" stroke-linejoin="round"/></svg>
<svg style="position:absolute;left:340px;top:550px" width="8" height="4"><path d="M0 0 H7 L3.5 4 Z" fill="#333"/></svg>
<div style="position:absolute;left:360px;top:543px;width:14px;height:6px;box-sizing:border-box;border:1px solid #1a6a18;border-radius:1px;background:linear-gradient(180deg,#8ee070,#3cb030 50%,#1a8018);"></div>
</body></html>
